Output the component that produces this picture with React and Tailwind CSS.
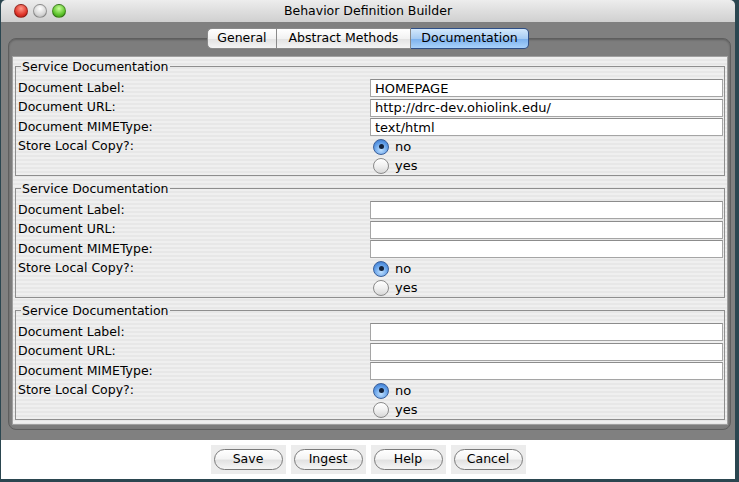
import React from 'react';

const TABS = ['General', 'Abstract Methods', 'Documentation'];

const GROUPS = [
  { label: 'HOMEPAGE', url: 'http://drc-dev.ohiolink.edu/', mime: 'text/html' },
  { label: '', url: '', mime: '' },
  { label: '', url: '', mime: '' },
];

function Light({ color }) {
  return (
    <div
      className={`w-[14px] h-[14px] rounded-full border border-black/30 ${color}`}
    />
  );
}

function Radio({ checked, label }) {
  return (
    <div className="flex items-center gap-[6px] pl-[3px] text-[13px]">
      {checked ? (
        <div className="w-[16px] h-[16px] rounded-full border border-[#3a5f9a] bg-[radial-gradient(circle_at_50%_70%,#bfe0ff_0%,#5d9be6_60%,#2f6cc4_100%)] flex items-center justify-center">
          <div className="w-[5px] h-[5px] rounded-full bg-[#14233c]" />
        </div>
      ) : (
        <div className="w-[16px] h-[16px] rounded-full border border-[#8a8a8a] bg-[linear-gradient(180deg,#ffffff_0%,#f0f0f0_50%,#d8d8d8_100%)]" />
      )}
      <span>{label}</span>
    </div>
  );
}

function Field({ value }) {
  return (
    <div className="h-[18px] bg-white border border-[#a5a5a5] border-t-[#8c8c8c] pl-[4px] flex items-center leading-none text-[13px]">
      {value}
    </div>
  );
}

function DocGroup({ label, url, mime }) {
  return (
    <fieldset className="mx-[2px] mb-[5px] border border-[#8e8e8e] pl-[2px] pr-[1px]">
      <legend className="ml-[3px] px-[1px] leading-[15px]">Service Documentation</legend>
      <div className="mt-[4px] grid grid-cols-[352px_1fr] grid-rows-[20px_19px_20px_19px_19px] items-center">
        <span>Document Label:</span>
        <Field value={label} />
        <span>Document URL:</span>
        <Field value={url} />
        <span>Document MIMEType:</span>
        <Field value={mime} />
        <span>Store Local Copy?:</span>
        <Radio checked label="no" />
        <span />
        <Radio label="yes" />
      </div>
    </fieldset>
  );
}

export default function App() {
  return (
    <div className="w-[739px] h-[482px] bg-[#2b4650] overflow-hidden font-['DejaVu_Sans',sans-serif] text-[12.5px] text-black">
      <div className="ml-[1px] w-[734px] h-[479px] flex flex-col rounded-t-[5px] overflow-hidden">
        {/* title bar */}
        <div className="h-[22px] relative flex items-center bg-[linear-gradient(180deg,#ededed_0%,#dedede_50%,#d0d0d0_100%)]">
          <div className="flex items-center gap-[5px] pl-[13px]">
            <Light color="bg-[radial-gradient(circle_at_50%_30%,#ff9a8a_0%,#e0362b_60%,#a5150e_100%)]" />
            <Light color="bg-[radial-gradient(circle_at_50%_30%,#ffffff_0%,#d6d6d6_60%,#a8a8a8_100%)]" />
            <Light color="bg-[radial-gradient(circle_at_50%_30%,#c8ff9a_0%,#5ec42c_60%,#2e7d10_100%)]" />
          </div>
          <div className="absolute inset-0 flex items-center justify-center pointer-events-none">
            Behavior Definition Builder
          </div>
        </div>

        {/* body */}
        <div className="h-[418px] bg-[#808080] pt-[6px] flex flex-col">
          <div className="flex justify-center relative z-10 -mb-[11px]">
            {TABS.map((t, i) => {
              const active = i === 2;
              return (
                <div
                  key={t}
                  className={`h-[21px] flex items-center border-y border-r
                    ${i === 0 ? 'border-l rounded-l-[5px] px-[9px]' : ''}
                    ${i === 1 ? 'px-[12px]' : ''}
                    ${i === 2 ? 'rounded-r-[5px] px-[10px]' : ''}
                    ${active
                      ? 'bg-[linear-gradient(180deg,#d3e8fc_0%,#a7ccf3_50%,#7fb3ee_55%,#a9d2fb_100%)] border-[#2f4f86]'
                      : 'bg-[linear-gradient(180deg,#ffffff_0%,#f2f2f2_50%,#e3e3e3_55%,#f4f4f4_100%)] border-[#8a8a8a]'}`}
                >
                  {t}
                </div>
              );
            })}
          </div>
          <div className="ml-[7px] mr-[4px] h-[392px] rounded-[8px] border border-[#5e5e5e] bg-[#7d7d7d] shadow-[inset_0_1px_2px_rgba(0,0,0,0.25)] pt-[17px] pl-[3px] pr-[2px] pb-[4px]">
            <div className="h-full border border-[#a0a0a0] bg-[repeating-linear-gradient(180deg,#efefef_0px,#efefef_2px,#e7e7e7_2px,#e7e7e7_4px)] pt-[2px]">
              {GROUPS.map((g, i) => (
                <DocGroup key={i} {...g} />
              ))}
            </div>
          </div>
        </div>

        {/* footer */}
        <div className="h-[39px] bg-white flex items-center justify-center gap-[5px]">
          {['Save', 'Ingest', 'Help', 'Cancel'].map((b) => (
            <div key={b} className="w-[75px] h-[29px] bg-[#ececec] flex items-center justify-center">
              <div className="w-[69px] h-[21px] rounded-full border border-[#7a7a7a] bg-[linear-gradient(180deg,#ffffff_0%,#f4f4f4_45%,#e2e2e2_55%,#f6f6f6_100%)] flex items-center justify-center">
                {b}
              </div>
            </div>
          ))}
        </div>
      </div>
    </div>
  );
}
